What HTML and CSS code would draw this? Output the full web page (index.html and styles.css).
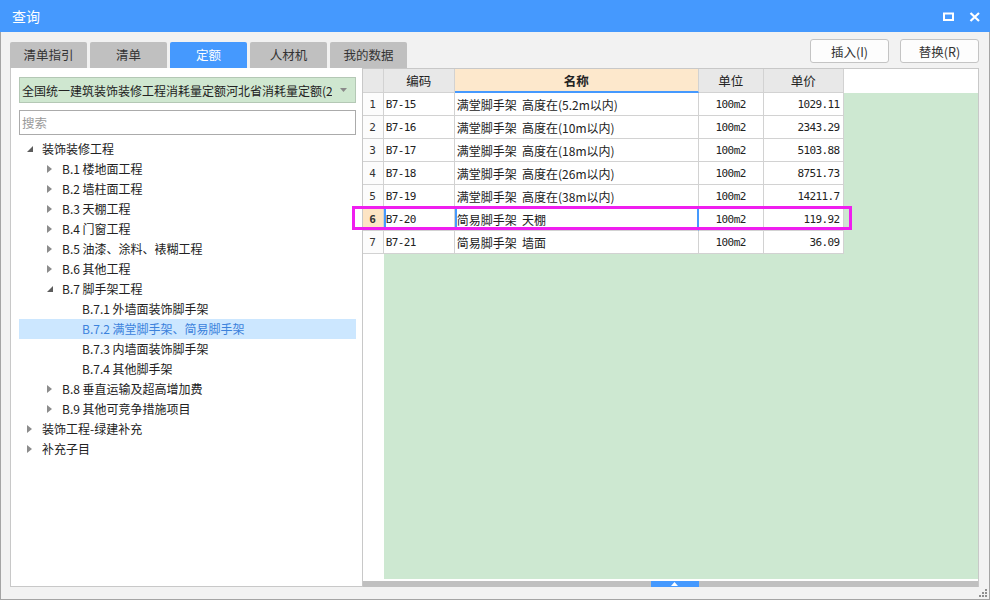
FILE: index.html
```html
<!DOCTYPE html>
<html lang="zh">
<head>
<meta charset="utf-8">
<title>查询</title>
<link rel="stylesheet" href="styles.css">
</head>
<body>
<div class="window">
  <div class="titlebar">
    <span class="title">查询</span>
    <span class="tb-icons">
      <svg class="ico-max" width="12" height="10" viewBox="0 0 12 10"><rect x="1" y="1.5" width="9" height="6.5" fill="none" stroke="#fff" stroke-width="2"/></svg>
      <svg class="ico-close" width="12" height="10" viewBox="0 0 12 10"><path d="M1.5 1 L10 9 M10 1 L1.5 9" stroke="#fff" stroke-width="2.2"/></svg>
    </span>
  </div>
  <div class="main">
    <div class="toolbar">
      <div class="tabs">
        <div class="tab">清单指引</div>
        <div class="tab">清单</div>
        <div class="tab active">定额</div>
        <div class="tab">人材机</div>
        <div class="tab">我的数据</div>
      </div>
      <div class="buttons">
        <button class="btn">插入(I)</button>
        <button class="btn">替换(R)</button>
      </div>
    </div>
    <div class="content">
      <div class="left">
        <div class="select">
          <span class="select-text">全国统一建筑装饰装修工程消耗量定额河北省消耗量定额(2012)</span>
          <svg class="select-arrow" width="7" height="4" viewBox="0 0 7 4"><path d="M0 0 H7 L3.5 4 Z" fill="#8a8a8a"/></svg>
        </div>
        <div class="search">搜索</div>
        <div class="tree">
          <div class="node l0"><span class="arr"><svg width="6" height="6" viewBox="0 0 6 6"><path d="M6 0 V6 H0 Z" fill="#5c5c5c"/></svg></span>装饰装修工程</div>
          <div class="node l1"><span class="arr"><svg width="5" height="8" viewBox="0 0 5 8"><path d="M0 0 L5 4 L0 8 Z" fill="#8c8c8c"/></svg></span>B.1 楼地面工程</div>
          <div class="node l1"><span class="arr"><svg width="5" height="8" viewBox="0 0 5 8"><path d="M0 0 L5 4 L0 8 Z" fill="#8c8c8c"/></svg></span>B.2 墙柱面工程</div>
          <div class="node l1"><span class="arr"><svg width="5" height="8" viewBox="0 0 5 8"><path d="M0 0 L5 4 L0 8 Z" fill="#8c8c8c"/></svg></span>B.3 天棚工程</div>
          <div class="node l1"><span class="arr"><svg width="5" height="8" viewBox="0 0 5 8"><path d="M0 0 L5 4 L0 8 Z" fill="#8c8c8c"/></svg></span>B.4 门窗工程</div>
          <div class="node l1"><span class="arr"><svg width="5" height="8" viewBox="0 0 5 8"><path d="M0 0 L5 4 L0 8 Z" fill="#8c8c8c"/></svg></span>B.5 油漆、涂料、裱糊工程</div>
          <div class="node l1"><span class="arr"><svg width="5" height="8" viewBox="0 0 5 8"><path d="M0 0 L5 4 L0 8 Z" fill="#8c8c8c"/></svg></span>B.6 其他工程</div>
          <div class="node l1"><span class="arr"><svg width="6" height="6" viewBox="0 0 6 6"><path d="M6 0 V6 H0 Z" fill="#5c5c5c"/></svg></span>B.7 脚手架工程</div>
          <div class="node l2"><span class="arr"></span>B.7.1 外墙面装饰脚手架</div>
          <div class="node l2 sel"><span class="arr"></span>B.7.2 满堂脚手架、简易脚手架</div>
          <div class="node l2"><span class="arr"></span>B.7.3 内墙面装饰脚手架</div>
          <div class="node l2"><span class="arr"></span>B.7.4 其他脚手架</div>
          <div class="node l1"><span class="arr"><svg width="5" height="8" viewBox="0 0 5 8"><path d="M0 0 L5 4 L0 8 Z" fill="#8c8c8c"/></svg></span>B.8 垂直运输及超高增加费</div>
          <div class="node l1"><span class="arr"><svg width="5" height="8" viewBox="0 0 5 8"><path d="M0 0 L5 4 L0 8 Z" fill="#8c8c8c"/></svg></span>B.9 其他可竞争措施项目</div>
          <div class="node l0"><span class="arr"><svg width="5" height="8" viewBox="0 0 5 8"><path d="M0 0 L5 4 L0 8 Z" fill="#8c8c8c"/></svg></span>装饰工程-绿建补充</div>
          <div class="node l0"><span class="arr"><svg width="5" height="8" viewBox="0 0 5 8"><path d="M0 0 L5 4 L0 8 Z" fill="#8c8c8c"/></svg></span>补充子目</div>
        </div>
      </div>
      <div class="grid">
        <div class="ghead">
          <div class="c rn hd"></div>
          <div class="c code hd">编码</div>
          <div class="c name hd hname">名称</div>
          <div class="c unit hd">单位</div>
          <div class="c price hd">单价</div>
        </div>
        <div class="gbody">
          <div class="row"><div class="c rn">1</div><div class="c code">B7-15</div><div class="c name">满堂脚手架&nbsp;&nbsp;高度在(5.2m以内)</div><div class="c unit">100m2</div><div class="c price">1029.11</div></div>
          <div class="row"><div class="c rn">2</div><div class="c code">B7-16</div><div class="c name">满堂脚手架&nbsp;&nbsp;高度在(10m以内)</div><div class="c unit">100m2</div><div class="c price">2343.29</div></div>
          <div class="row"><div class="c rn">3</div><div class="c code">B7-17</div><div class="c name">满堂脚手架&nbsp;&nbsp;高度在(18m以内)</div><div class="c unit">100m2</div><div class="c price">5103.88</div></div>
          <div class="row"><div class="c rn">4</div><div class="c code">B7-18</div><div class="c name">满堂脚手架&nbsp;&nbsp;高度在(26m以内)</div><div class="c unit">100m2</div><div class="c price">8751.73</div></div>
          <div class="row"><div class="c rn">5</div><div class="c code">B7-19</div><div class="c name">满堂脚手架&nbsp;&nbsp;高度在(38m以内)</div><div class="c unit">100m2</div><div class="c price">14211.7</div></div>
          <div class="row cur"><div class="c rn">6</div><div class="c code">B7-20</div><div class="c name">简易脚手架&nbsp;&nbsp;天棚</div><div class="c unit">100m2</div><div class="c price">119.92</div></div>
          <div class="row"><div class="c rn">7</div><div class="c code">B7-21</div><div class="c name">简易脚手架&nbsp;&nbsp;墙面</div><div class="c unit">100m2</div><div class="c price">36.09</div></div>
        </div>
        <div class="hscroll"><span class="thumb"><svg width="7" height="4" viewBox="0 0 7 4"><path d="M0 4 L3.5 0 L7 4 Z" fill="#fff"/></svg></span></div>
      </div>
      <div class="mark"></div>
    </div>
    <svg class="grip" width="9" height="9" viewBox="0 0 9 9"><g fill="#8f8f8f"><rect x="6" y="0" width="2" height="2"/><rect x="3" y="3" width="2" height="2"/><rect x="6" y="3" width="2" height="2"/><rect x="0" y="6" width="2" height="2"/><rect x="3" y="6" width="2" height="2"/><rect x="6" y="6" width="2" height="2"/></g></svg>
  </div>
</div>
</body>
</html>
```

FILE: styles.css
```css
* { box-sizing: border-box; }
html, body { margin: 0; padding: 0; }
body {
  width: 990px;
  height: 600px;
  overflow: hidden;
  font-family: "Noto Sans CJK SC", "Noto Sans", sans-serif;
  color: #222;
}
.window {
  width: 990px;
  height: 600px;
  display: flex;
  flex-direction: column;
}
.titlebar {
  height: 32px;
  flex: none;
  background: #4599fe;
  display: flex;
  align-items: center;
  justify-content: space-between;
  padding: 0 9px 0 12px;
}
.title {
  color: #fff;
  font-size: 14px;
  line-height: 32px;
}
.tb-icons {
  display: flex;
  align-items: center;
  gap: 14px;
  padding-top: 1px;
}
.ico-max, .ico-close { display: block; }
.main {
  flex: 1;
  position: relative;
  background: #f2f2f2;
  border: 1px solid #a4a4a4;
  border-top: none;
  padding: 7px 10px 12px 9px;
  display: flex;
  flex-direction: column;
}
.toolbar {
  height: 29px;
  display: flex;
  justify-content: space-between;
  flex: none;
}
.tabs {
  display: flex;
  gap: 3px;
  align-self: flex-end;
}
.tab {
  width: 77px;
  height: 26px;
  line-height: 26px;
  text-align: center;
  font-size: 12.5px;
  color: #333;
  background: #c0c0c0;
  border-radius: 2px 2px 0 0;
}
.tab.active {
  background: #4599fe;
  color: #fff;
}
.buttons {
  display: flex;
  gap: 11px;
  align-self: flex-start;
}
.btn {
  width: 79px;
  height: 24px;
  margin: 0;
  padding: 0;
  font-family: inherit;
  font-size: 12.5px;
  color: #333;
  background: #fdfdfd;
  border: 1px solid #c4c4c4;
  border-radius: 3px;
}
.content {
  flex: 1;
  display: flex;
  position: relative;
}
.left {
  width: 352px;
  background: #fff;
  border-left: 1px solid #c8c8c8;
  border-bottom: 1px solid #c8c8c8;
  padding: 9px 6px 0 8px;
}
.select {
  height: 26px;
  background: #cfe7d0;
  border: 1px solid #b4c8b5;
  display: flex;
  align-items: center;
  padding: 0 8px 0 2px;
  overflow: hidden;
}
.select-text {
  font-size: 12px;
  white-space: nowrap;
  overflow: hidden;
  flex: 1;
  width: 0;
}
.select-arrow { flex: none; margin-left: 8px; }
.search {
  margin-top: 7px;
  height: 25px;
  border: 1px solid #ababab;
  font-size: 12.5px;
  color: #9a9a9a;
  line-height: 23px;
  padding-left: 2px;
}
.tree { margin-top: 4px; }
.node {
  height: 20px;
  line-height: 20px;
  font-size: 12px;
  color: #222;
  display: flex;
  align-items: center;
  white-space: nowrap;
}
.node.l1 { padding-left: 20px; }
.node.l2 { padding-left: 40px; }
.node.sel {
  background: #cce7ff;
  color: #3b82dc;
}
.arr {
  width: 23px;
  height: 20px;
  display: flex;
  align-items: center;
  padding-left: 8px;
  flex: none;
}
.arr svg { display: block; }
.grid {
  width: 618px;
  display: flex;
  flex-direction: column;
  background: #fff;
  border: 1px solid #c8c8c8;
  border-bottom: none;
}
.ghead {
  height: 24px;
  display: flex;
  flex: none;
}
.gbody {
  flex: 1;
  background: linear-gradient(to right, #fff 21px, #cde8d1 21px);
  background-clip: padding-box;
  border-bottom: 2px solid #fff;
}
.row {
  display: flex;
  height: 23px;
}
.c {
  height: 100%;
  border-right: 1px solid #d2d2d2;
  border-bottom: 1px solid #d2d2d2;
  font-size: 12px;
  white-space: nowrap;
  overflow: hidden;
  display: flex;
  align-items: center;
  background: #fff;
}
.rn {
  width: 21px;
  justify-content: center;
  font-family: "DejaVu Sans Mono", monospace;
  font-size: 11px;
  background: #fcfcfc;
  color: #333;
}
.code {
  width: 71px;
  padding-left: 2px;
  font-family: "DejaVu Sans Mono", monospace;
  font-size: 11px;
  letter-spacing: -0.6px;
}
.name {
  width: 244px;
  padding-left: 2px;
  font-size: 12px;
}
.unit {
  width: 65px;
  justify-content: center;
  font-family: "DejaVu Sans Mono", monospace;
  font-size: 11px;
  letter-spacing: -0.6px;
}
.price {
  width: 80px;
  justify-content: flex-end;
  padding-right: 3px;
  font-family: "DejaVu Sans Mono", monospace;
  font-size: 11px;
  letter-spacing: -0.6px;
}
.hd {
  background: #e8e8e8;
  font-family: "Noto Sans CJK SC", sans-serif;
  font-size: 12.5px;
  letter-spacing: 0;
  justify-content: center;
  padding: 0;
  color: #222;
}
.hd.hname {
  background: #fde8cc;
  font-weight: bold;
  border-bottom: 2px solid #4599fe;
}
.row.cur .rn {
  background: #fde4c4;
  font-weight: bold;
}
.row.cur .code { box-shadow: inset 2px 0 0 #4599fe; }
.row.cur .name { box-shadow: inset 2px 0 0 #4599fe, inset 0 -2px 0 #4599fe, inset -1px 0 0 #4599fe; border-right-color: #4599fe; }
.hscroll {
  height: 6px;
  flex: none;
  background: #c0c0c0;
  display: flex;
  justify-content: center;
  padding-left: 9px;
}
.thumb {
  width: 48px;
  height: 6px;
  background: #4599fe;
  display: flex;
  align-items: center;
  justify-content: center;
}
.thumb svg { display: block; }
.mark {
  position: absolute;
  left: 342px;
  top: 138px;
  width: 500px;
  height: 24px;
  border: 3px solid #ef1eef;
  pointer-events: none;
}
.grip {
  position: absolute;
  right: 1px;
  bottom: 1px;
}
```
